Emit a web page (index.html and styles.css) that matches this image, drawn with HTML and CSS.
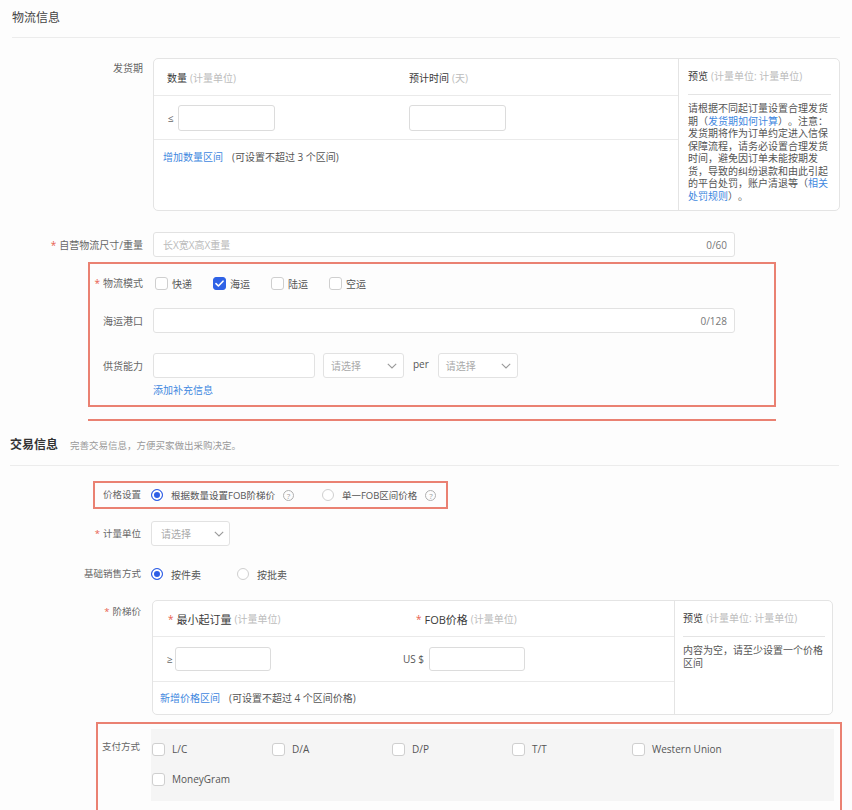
FILE: index.html
```html
<!DOCTYPE html>
<html lang="zh-CN">
<head>
<meta charset="utf-8">
<title>物流信息 / 交易信息</title>
<link rel="stylesheet" href="styles.css">
</head>
<body>
<div class="page">

  <section class="upper">
    <div class="sec-head">物流信息</div>

    <div class="row row-ship">
      <div class="label">发货期</div>
      <div class="tbox ship-box">
        <div class="tb-main">
          <div class="tb-head">
            <div class="hcol ship-a"><span class="dark">数量</span><span class="muted gap">(计量单位)</span></div>
            <div class="hcol"><span class="dark">预计时间</span><span class="muted gap">(天)</span></div>
          </div>
          <div class="tb-row">
            <div class="rcol ship-ra"><span class="sym">≤</span><span class="inp-s"></span></div>
            <div class="rcol"><span class="inp-s"></span></div>
          </div>
          <div class="tb-foot"><span class="link">增加数量区间</span><span class="hint">(可设置不超过 3 个区间)</span></div>
        </div>
        <div class="preview">
          <div class="pv-head"><span class="dark">预览</span><span class="muted gap">(计量单位: 计量单位)</span></div>
          <div class="pv-body">请根据不同起订量设置合理发货<br>期（<span class="link">发货期如何计算</span>）。注意：<br>发货期将作为订单约定进入信保<br>保障流程，请务必设置合理发货<br>时间，避免因订单未能按期发<br>货，导致的纠纷退款和由此引起<br>的平台处罚，账户清退等（<span class="link">相关</span><br><span class="link">处罚规则</span>）。</div>
        </div>
      </div>
    </div>

    <div class="row row-size">
      <div class="label"><span class="star">*</span>自营物流尺寸/重量</div>
      <div class="inp-wide"><span class="ph">长X宽X高X重量</span><span class="count">0/60</span></div>
    </div>

    <div class="rbox rbox-log">
      <div class="row row-mode">
        <div class="label"><span class="star">*</span>物流模式</div>
        <div class="checks">
          <span class="ck-item"><span class="cb"></span>快递</span>
          <span class="ck-item"><span class="cb on"><svg width="9" height="7" viewBox="0 0 9 7"><path d="M1 3.6 L3.4 6 L8 1.2" fill="none" stroke="#fff" stroke-width="1.6" stroke-linecap="round" stroke-linejoin="round"/></svg></span>海运</span>
          <span class="ck-item"><span class="cb"></span>陆运</span>
          <span class="ck-item"><span class="cb"></span>空运</span>
        </div>
      </div>
      <div class="row row-port">
        <div class="label">海运港口</div>
        <div class="inp-wide"><span class="ph"></span><span class="count">0/128</span></div>
      </div>
      <div class="row row-supply">
        <div class="label">供货能力</div>
        <span class="inp-supply"></span>
        <span class="sel sel-a">请选择<svg width="10" height="6" viewBox="0 0 10 6"><path d="M0.8 0.8 L5 5 L9.2 0.8" fill="none" stroke="#9a9a9a" stroke-width="1.1"/></svg></span>
        <span class="per">per</span>
        <span class="sel sel-b">请选择<svg width="10" height="6" viewBox="0 0 10 6"><path d="M0.8 0.8 L5 5 L9.2 0.8" fill="none" stroke="#9a9a9a" stroke-width="1.1"/></svg></span>
      </div>
      <div class="add-info"><span class="link">添加补充信息</span></div>
    </div>

    <div class="red-line"></div>
  </section>

  <section class="lower">
    <div class="sec-head2"><span class="title2">交易信息</span><span class="sub2">完善交易信息，方便买家做出采购决定。</span></div>

    <div class="rbox rbox-price">
      <div class="label">价格设置</div>
      <span class="rd on"></span><span class="rd-text">根据数量设置FOB阶梯价</span><span class="help">?</span>
      <span class="rd rd-2"></span><span class="rd-text">单一FOB区间价格</span><span class="help">?</span>
    </div>

    <div class="row row-unit">
      <div class="label"><span class="star">*</span>计量单位</div>
      <span class="sel sel-unit">请选择<svg width="10" height="6" viewBox="0 0 10 6"><path d="M0.8 0.8 L5 5 L9.2 0.8" fill="none" stroke="#9a9a9a" stroke-width="1.1"/></svg></span>
    </div>

    <div class="row row-sale">
      <div class="label">基础销售方式</div>
      <span class="rd on"></span><span class="rd-text">按件卖</span>
      <span class="rd rd-3"></span><span class="rd-text">按批卖</span>
    </div>

    <div class="row row-tier">
      <div class="label"><span class="star">*</span>阶梯价</div>
      <div class="tbox tier-box">
        <div class="tb-main">
          <div class="tb-head2">
            <div class="hcol tier-a"><span class="star">*</span><span class="dark big">最小起订量</span><span class="muted gap">(计量单位)</span></div>
            <div class="hcol"><span class="star">*</span><span class="dark big">FOB价格</span><span class="muted gap">(计量单位)</span></div>
          </div>
          <div class="tb-row2">
            <div class="rcol tier-ra"><span class="sym2">≥</span><span class="inp-s2"></span></div>
            <div class="rcol"><span class="usd">US $</span><span class="inp-s2"></span></div>
          </div>
          <div class="tb-foot2"><span class="link">新增价格区间</span><span class="hint">(可设置不超过 4 个区间价格)</span></div>
        </div>
        <div class="preview preview2">
          <div class="pv-head2"><span class="dark">预览</span><span class="muted gap">(计量单位: 计量单位)</span></div>
          <div class="pv-body2">内容为空，请至少设置一个价格<br>区间</div>
        </div>
      </div>
    </div>

    <div class="rbox rbox-pay">
      <div class="label">支付方式</div>
      <div class="pay-grid">
        <span class="ck-pay"><span class="cb"></span>L/C</span>
        <span class="ck-pay"><span class="cb"></span>D/A</span>
        <span class="ck-pay"><span class="cb"></span>D/P</span>
        <span class="ck-pay"><span class="cb"></span>T/T</span>
        <span class="ck-pay"><span class="cb"></span>Western Union</span>
        <span class="ck-pay"><span class="cb"></span>MoneyGram</span>
      </div>
    </div>
  </section>

</div>
</body>
</html>
```

FILE: styles.css
```css
* { box-sizing: border-box; }

html, body {
  margin: 0;
  padding: 0;
  overflow: hidden;
}

body {
  width: 852px;
  height: 810px;
  background: #fdfdfd;
  font-family: "Open Sans", "Noto Sans CJK SC", sans-serif;
  font-size: 10px;
  color: #555;
  text-spacing-trim: space-all;
}

.page { width: 852px; }

/* ---------- shared ---------- */
.row { display: flex; }
.label {
  flex: none;
  text-align: right;
  padding-right: 10px;
  line-height: 20px;
  color: #666;
  white-space: nowrap;
}
.star { color: #e8604e; margin-right: 3px; }
.dark { color: #3a3a3a; }
.big { font-size: 11px; }
.muted { color: #bcbcbc; }
.gap { margin-left: 3px; }
.link { color: #3f88e0; }
.hint { color: #555; margin-left: 9px; }

.rbox { border: 2px solid #ea8172; }

.tbox {
  display: flex;
  border: 1px solid #e4e4e4;
  border-radius: 5px;
  background: #fff;
}
.tb-main { flex: 1; display: flex; flex-direction: column; }
.hcol, .rcol { display: flex; align-items: center; white-space: nowrap; }

.cb {
  flex: none;
  width: 13px;
  height: 13px;
  border: 1px solid #cfcfcf;
  border-radius: 3px;
  background: #fff;
  display: inline-flex;
  align-items: center;
  justify-content: center;
}
.cb.on { background: #2f62e6; border-color: #2f62e6; }

.rd {
  flex: none;
  width: 12px;
  height: 12px;
  border: 1px solid #cfcfcf;
  border-radius: 50%;
  background: #fff;
}
.rd.on {
  border-color: #2f5fe6;
  background: #2f5fe6;
  box-shadow: inset 0 0 0 2px #fff;
}
.rd-text { margin-left: 8px; color: #555; white-space: nowrap; }
.help {
  flex: none;
  width: 11px;
  height: 11px;
  margin-left: 8px;
  border: 1px solid #b0b0b0;
  border-radius: 50%;
  color: #a0a0a0;
  font-size: 8px;
  line-height: 9px;
  text-align: center;
}

.sel {
  flex: none;
  height: 25px;
  border: 1px solid #e2e2e2;
  border-radius: 3px;
  background: #fff;
  display: flex;
  align-items: center;
  justify-content: space-between;
  padding: 0 6px 0 7px;
  color: #aaa;
}

.inp-wide {
  flex: none;
  width: 582px;
  height: 25px;
  border: 1px solid #e2e2e2;
  border-radius: 3px;
  background: #fff;
  display: flex;
  align-items: center;
  justify-content: space-between;
  padding: 0 7px 0 9px;
}
.ph { color: #bbb; }
.count { color: #777; }

/* ---------- upper section ---------- */
.sec-head {
  margin: 0 12px;
  height: 38px;
  line-height: 36px;
  border-bottom: 1px solid #ececec;
  font-size: 12px;
  color: #444;
}

.upper .label { width: 153px; }

.row-ship { margin-top: 20px; align-items: flex-start; }
.ship-box { width: 687px; height: 153px; }
.tb-head {
  height: 37px;
  border-bottom: 1px solid #eaeaea;
  display: flex;
  align-items: center;
  padding-left: 13px;
}
.ship-a { width: 242px; }
.tb-row {
  height: 44px;
  border-bottom: 1px solid #eaeaea;
  display: flex;
  align-items: center;
  padding-left: 14px;
}
.ship-ra { width: 241px; }
.sym { width: 10px; color: #666; }
.inp-s {
  width: 97px;
  height: 26px;
  border: 1px solid #dcdcdc;
  border-radius: 3px;
  background: #fff;
}
.tb-foot { padding: 9px 0 0 9px; line-height: 16px; }

.preview {
  flex: none;
  width: 161px;
  border-left: 1px solid #e4e4e4;
}
.pv-head {
  margin: 0 8px 0 9px;
  height: 36px;
  line-height: 35px;
  border-bottom: 1px solid #e4e4e4;
  white-space: nowrap;
}
.pv-body {
  padding: 7px 0 0 9px;
  line-height: 12.5px;
  color: #555;
  white-space: nowrap;
}

.row-size { margin-top: 21px; align-items: center; }

.rbox-log {
  margin: 5px 0 0 88px;
  width: 688px;
  padding: 10px 0 7px 0;
}
.upper .rbox-log .label { width: 63px; }
.row-mode { height: 18px; align-items: center; }
.row-mode .label { line-height: 18px; }
.checks { display: flex; align-items: center; padding-left: 2px; }
.ck-item {
  display: flex;
  align-items: center;
  width: 58px;
  white-space: nowrap;
  color: #555;
}
.ck-item .cb { margin-right: 4px; }
.row-port { margin-top: 16px; align-items: center; }
.row-supply { margin-top: 20px; align-items: center; }
.inp-supply {
  flex: none;
  width: 162px;
  height: 25px;
  border: 1px solid #e2e2e2;
  border-radius: 3px;
  background: #fff;
}
.sel-a { width: 81px; margin-left: 8px; }
.per { margin: -4px 9px 0 9px; color: #555; }
.sel-b { width: 80px; }
.add-info { margin-top: 4px; padding-left: 63px; line-height: 16px; }

.red-line {
  margin: 12px 0 0 88px;
  width: 688px;
  height: 2px;
  background: #ea8172;
}

/* ---------- lower section ---------- */
.sec-head2 {
  margin: 0 13px 0 10px;
  height: 45px;
  padding-top: 14px;
  line-height: 20px;
  border-bottom: 1px solid #ececec;
}
.title2 { font-size: 12px; font-weight: bold; color: #333; }
.sub2 { margin-left: 12px; font-size: 9.5px; color: #999; }

.lower .label { width: 151px; font-size: 9.5px; }

.rbox-price {
  margin: 15px 0 0 93px;
  width: 355px;
  height: 28px;
  display: flex;
  align-items: center;
}
.rbox-price .rd-text { font-size: 9.5px; }
.lower .rbox-price .label { width: 56px; }
.rd-2 { margin-left: 28px; }

.row-unit { margin-top: 12px; align-items: center; }
.sel-unit { width: 79px; padding-left: 9px; padding-right: 5px; }

.row-sale { margin-top: 18px; height: 20px; align-items: center; }
.rd-3 { margin-left: 36px; }

.row-tier { margin-top: 16px; align-items: flex-start; }
.row-tier .label { padding-top: 2px; }
.tier-box { margin-left: 1px; width: 681px; height: 115px; }
.tb-head2 {
  height: 36px;
  border-bottom: 1px solid #eaeaea;
  display: flex;
  align-items: center;
  padding-left: 15px;
}
.tier-a { width: 248px; }
.tb-row2 {
  height: 45px;
  border-bottom: 1px solid #eaeaea;
  display: flex;
  align-items: center;
  padding-left: 14px;
}
.tier-ra { width: 236px; }
.sym2 { width: 8px; color: #666; }
.usd { width: 26px; color: #555; white-space: nowrap; }
.inp-s2 {
  width: 96px;
  height: 24px;
  border: 1px solid #dcdcdc;
  border-radius: 3px;
  background: #fff;
}
.tb-foot2 { padding-left: 7px; line-height: 32px; }

.preview2 { width: 158px; }
.pv-head2 {
  margin: 0 7px 0 8px;
  height: 36px;
  line-height: 35px;
  border-bottom: 1px solid #e4e4e4;
  white-space: nowrap;
}
.pv-body2 {
  padding: 7px 0 0 8px;
  line-height: 12.5px;
  color: #555;
  white-space: nowrap;
}

.rbox-pay {
  margin: 7px 0 0 96px;
  width: 746px;
  padding: 5px 0 40px 0;
  display: flex;
  align-items: flex-start;
}
.lower .rbox-pay .label { width: 53px; padding-right: 11px; padding-top: 8px; }
.pay-grid {
  width: 683px;
  background: #f5f5f5;
  padding: 5px 0 7px 1px;
  display: grid;
  grid-template-columns: repeat(5, 120px);
  grid-auto-rows: 30px;
}
.ck-pay {
  display: flex;
  align-items: center;
  color: #555;
  white-space: nowrap;
}
.ck-pay .cb { margin-right: 7px; }
```
